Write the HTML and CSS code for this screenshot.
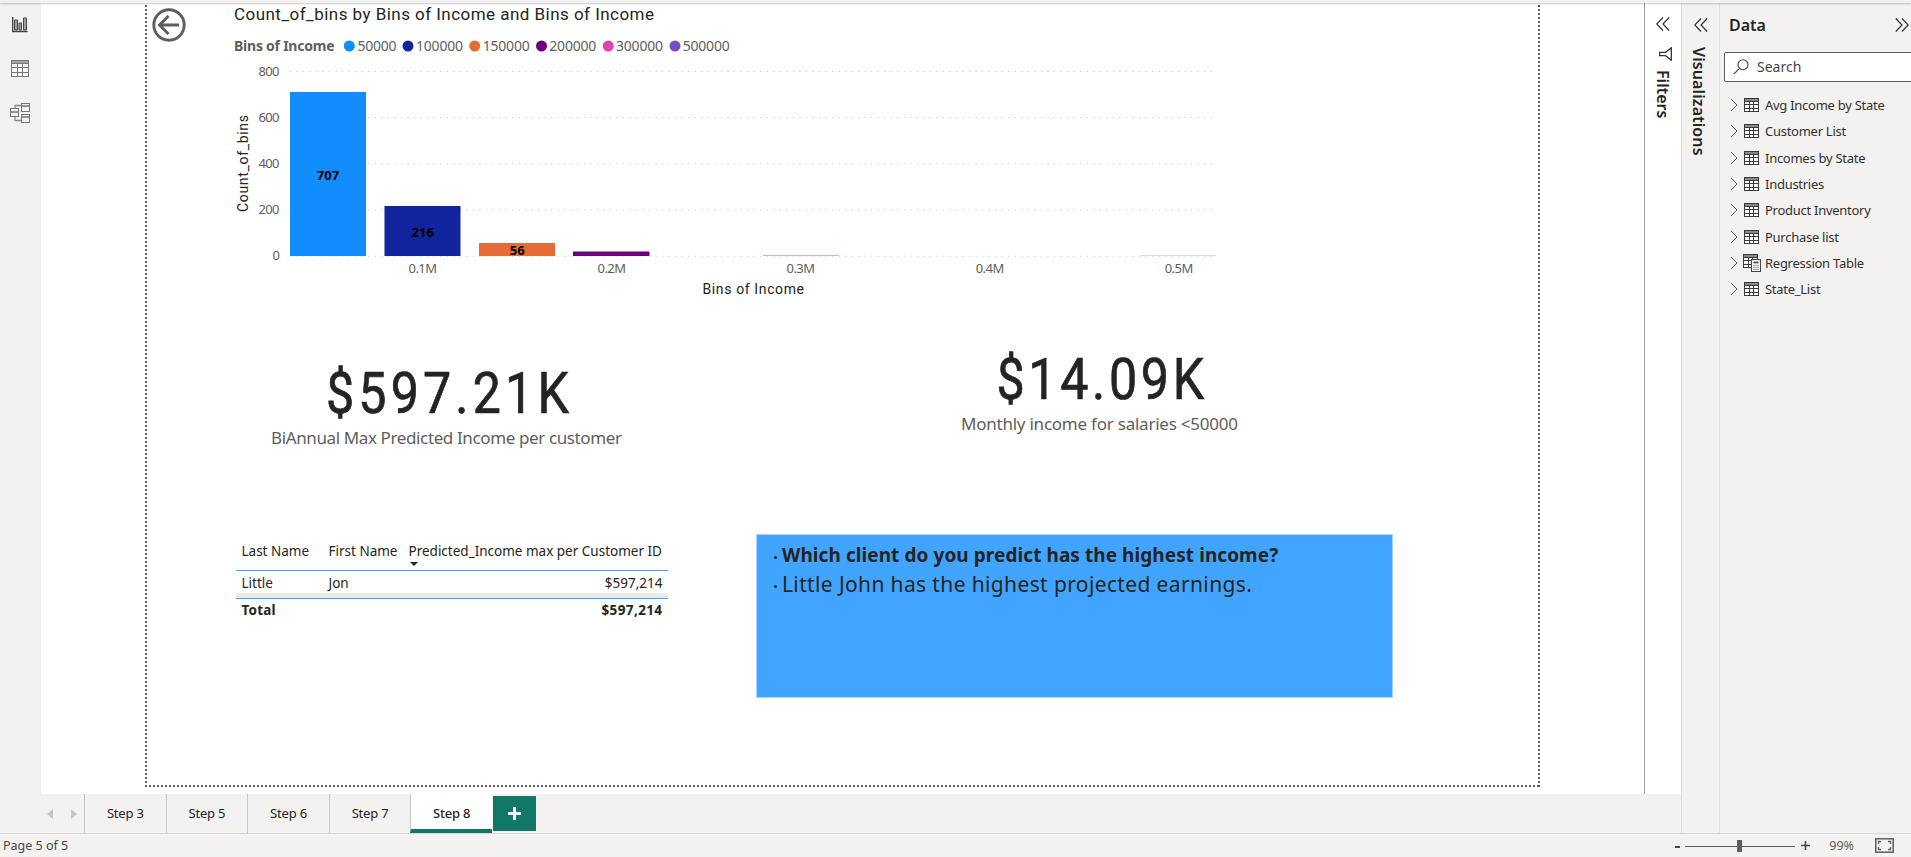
FILE: index.html
```html
<!DOCTYPE html>
<html lang="en">
<head>
<meta charset="utf-8">
<title>Report</title>
<link rel="stylesheet" href="styles.css">
</head>
<body>
<svg width="0" height="0" class="defs">
  <symbol id="i-table" viewBox="0 0 15 14"><rect x=".5" y=".5" width="14" height="13" fill="#fff" stroke="#3b3a39"/><rect x="1" y="1" width="13" height="2.500" fill="#8a8886"/><path d="M.5 3.500h14M.5 6.500h14M.5 10.500h14M5.500 3.500v10M9.500 3.500v10" stroke="#3b3a39" fill="none"/></symbol>
  <symbol id="i-chev" viewBox="0 0 8 14"><path d="M1 1l6 6-6 6" fill="none" stroke="#605e5c"/></symbol>
  <symbol id="i-dleft" viewBox="0 0 14 14"><path d="M7 .5L.8 7 7 13.500M13.200.5L7 7l6.200 6.500" fill="none" stroke="#323130" stroke-width="1.200"/></symbol>
</svg>
<div class="ribbon"></div>
<div class="main">
  <nav class="rail">
    <svg width="16" height="16" viewBox="0 0 16 16"><path d="M.7 0v14.500H15.500" fill="none" stroke="#484644" stroke-width="1.400"/><path d="M2.500 3h3v10h-3zM7 6h2.500v7H7zM11.500 1h3v12h-3z" fill="#a19f9d" stroke="#484644"/></svg>
    <svg width="18" height="17" viewBox="0 0 18 17"><rect x=".5" y=".5" width="17" height="16" fill="#f7f6f5" stroke="#797775"/><rect x="1" y="1" width="16" height="2.500" fill="#a8a6a4"/><path d="M.5 3.500h17M.5 7.500h17M.5 12.500h17M6.500 3.500v13M11.500 3.500v13" stroke="#797775" fill="none"/></svg>
    <svg width="20" height="20" viewBox="0 0 20 20"><path d="M5 6V2.500h6.500M5 13v4.500h6.500" fill="none" stroke="#8a8886" stroke-width="1.300"/><g fill="#f3f2f1" stroke="#797775"><rect x=".5" y="5.500" width="8" height="8"/><rect x="11.500" y=".5" width="8" height="8"/><rect x="11.500" y="11.500" width="8" height="8"/></g><path d="M.5 9h8M12 3h7M12 14h7" stroke="#797775" stroke-width="1.400"/></svg>
  </nav>
  <div class="workspace">
    <div class="upper">
      <div class="stage">
        <div class="page">
          <svg class="visual back" width="34" height="34" viewBox="0 0 34 34"><g fill="none" stroke="#605e5c" stroke-width="2.900"><circle cx="17" cy="17" r="15.200"/><path d="M27 17H8M16.500 8L7.500 17l9 9"/></g></svg>
          <svg class="visual chart" width="1000" height="310" viewBox="230 0 1000 310">
            <g class="din"><text x="234" y="20" font-size="17" textLength="420">Count_of_bins by Bins of Income and Bins of Income</text>
            <text x="702.500" y="294" font-size="14" textLength="101.500">Bins of Income</text>
            <text transform="translate(248 212) rotate(-90)" font-size="14" textLength="97">Count_of_bins</text></g>
            <g class="legend" font-size="14"><text class="b" x="234" y="51" textLength="100.500">Bins of Income</text>
            <text x="357.500" y="51" textLength="39">50000</text><text x="416" y="51" textLength="47">100000</text><text x="482.700" y="51" textLength="47">150000</text><text x="549.300" y="51" textLength="47">200000</text><text x="616" y="51" textLength="47">300000</text><text x="682.700" y="51" textLength="47">500000</text></g>
            <circle cx="349.300" cy="46" r="5.500" fill="#118dff"/><circle cx="408" cy="46" r="5.500" fill="#12239e"/><circle cx="474.700" cy="46" r="5.500" fill="#e66c37"/><circle cx="541.500" cy="46" r="5.500" fill="#6b007b"/><circle cx="608.300" cy="46" r="5.500" fill="#e044a7"/><circle cx="675" cy="46" r="5.500" fill="#744ec2"/>
            <path class="grid" d="M290 71.500H1216M290 117.500H1216M290 163.700H1216M290 210H1216M290 256.300H1216"/>
            <g class="axis" font-size="13"><text x="258.500" y="76" textLength="21">800</text><text x="258.500" y="122" textLength="21">600</text><text x="258.500" y="168" textLength="21">400</text><text x="258.500" y="214" textLength="21">200</text><text x="272.500" y="260">0</text>
            <text x="408.500" y="273" textLength="28.500">0.1M</text><text x="597.500" y="273" textLength="28.500">0.2M</text><text x="786.500" y="273" textLength="28.500">0.3M</text><text x="975.700" y="273" textLength="28.500">0.4M</text><text x="1164.700" y="273" textLength="28.500">0.5M</text></g>
            <rect x="290" y="92" width="76" height="164" fill="#118dff"/><rect x="384.500" y="206" width="76" height="50" fill="#12239e"/><rect x="479" y="243" width="76" height="13" fill="#e66c37"/><rect x="573" y="251.500" width="76.500" height="4.500" fill="#6b007b"/><rect x="763" y="255" width="76" height="1" fill="#e9a3d3"/><rect x="1141" y="255" width="75" height="1" fill="#d9d3ef"/>
            <g class="value" font-size="13"><text x="316.700" y="180" textLength="22.500">707</text><text x="411.500" y="237" textLength="22.500">216</text><text x="509.700" y="255" textLength="15">56</text></g>
          </svg>
          <svg class="visual card1" width="360" height="95" viewBox="268 360 360 95"><text class="din big" transform="translate(326 412.500) scale(.88 1)" font-size="57" textLength="276">$597.21K</text><text class="cap" x="271" y="444" font-size="17" textLength="351">BiAnnual Max Predicted Income per customer</text></svg>
          <svg class="visual card2" width="290" height="95" viewBox="955 346 290 95"><text class="din big" transform="translate(996.500 398.500) scale(.88 1)" font-size="57" textLength="236">$14.09K</text><text class="cap" x="961" y="430" font-size="17" textLength="277">Monthly income for salaries &lt;50000</text></svg>
          <div class="visual table">
            <div class="row head"><span>Last Name</span><span>First Name</span><span class="wide">Predicted_Income max per Customer ID<i class="sort"></i></span></div>
            <div class="row body"><span>Little</span><span>Jon</span><span class="num">$597,214</span></div>
            <div class="row total"><span>Total</span><span></span><span class="num">$597,214</span></div>
          </div>
          <div class="visual note">
            <div class="q"><i></i><b>Which client do you predict has the highest income?</b></div>
            <div class="a"><i></i><span>Little John has the highest projected earnings.</span></div>
          </div>
        </div>
      </div>
      <aside class="filters">
        <svg width="14" height="14"><use href="#i-dleft"/></svg>
        <svg class="funnel" width="13" height="14" viewBox="0 0 13 14"><path d="M12.300.8v12.400L6.500 8.700H.7V5.300h5.800z" fill="none" stroke="#323130" stroke-width="1.300"/></svg>
        <span class="vert">Filters</span>
      </aside>
    </div>
    <div class="tabs">
      <div class="arrows"><svg width="6" height="10"><path d="M6 0v10L0 5z" fill="#c8c6c4"/></svg><svg width="6" height="10"><path d="M0 0v10l6-5z" fill="#c8c6c4"/></svg></div>
      <div class="tab">Step 3</div><div class="tab">Step 5</div><div class="tab">Step 6</div><div class="tab">Step 7</div><div class="tab on">Step 8</div>
      <div class="add"><svg width="13" height="13"><path d="M6.500 0v13M0 6.500h13" stroke="#fff" stroke-width="3"/></svg></div>
    </div>
  </div>
  <aside class="viz"><svg width="14" height="14"><use href="#i-dleft"/></svg><span class="vert">Visualizations</span></aside>
  <aside class="data">
    <div class="dhead"><span>Data</span><svg width="14" height="14"><use href="#i-dleft" transform="translate(14 0) scale(-1 1)"/></svg></div>
    <div class="search"><svg width="16" height="16" viewBox="0 0 16 16"><g fill="none" stroke="#484644" stroke-width="1.100"><circle cx="10" cy="5.700" r="5"/><path d="M6.500 9.300L.7 15.200"/></g></svg><span>Search</span></div>
    <div class="list">
      <div class="item"><svg class="c"><use href="#i-chev"/></svg><svg class="t"><use href="#i-table"/></svg><span>Avg Income by State</span></div>
      <div class="item"><svg class="c"><use href="#i-chev"/></svg><svg class="t"><use href="#i-table"/></svg><span>Customer List</span></div>
      <div class="item"><svg class="c"><use href="#i-chev"/></svg><svg class="t"><use href="#i-table"/></svg><span>Incomes by State</span></div>
      <div class="item"><svg class="c"><use href="#i-chev"/></svg><svg class="t"><use href="#i-table"/></svg><span>Industries</span></div>
      <div class="item"><svg class="c"><use href="#i-chev"/></svg><svg class="t"><use href="#i-table"/></svg><span>Product Inventory</span></div>
      <div class="item"><svg class="c"><use href="#i-chev"/></svg><svg class="t"><use href="#i-table"/></svg><span>Purchase list</span></div>
      <div class="item"><svg class="c"><use href="#i-chev"/></svg><svg class="t calc" viewBox="0 0 18 18"><use href="#i-table" width="15" height="14"/><rect x="8.500" y="5.500" width="9" height="12" fill="#f3f2f1" stroke="#484644"/><path d="M10.500 8.500h5" stroke="#484644" stroke-width="1.600"/><path d="M10.500 11.500h5M10.500 13.500h5M10.500 15.500h5" stroke="#605e5c" stroke-dasharray="1 1"/></svg><span>Regression Table</span></div>
      <div class="item"><svg class="c"><use href="#i-chev"/></svg><svg class="t"><use href="#i-table"/></svg><span>State_List</span></div>
    </div>
  </aside>
</div>
<footer class="status">
  <span class="pg">Page 5 of 5</span>
  <div class="zoom"><svg width="5" height="14"><path d="M0 8h5" stroke="#484644" stroke-width="2"/></svg>
  <svg class="slider" width="110" height="12"><path d="M0 6.500h110" stroke="#605e5c"/><rect x="52" width="5" height="12" fill="#605e5c"/></svg>
  <svg width="9" height="9"><path d="M4.500 0v9M0 4.500h9" stroke="#484644" stroke-width="1.600"/></svg>
  <span class="pct">99%</span>
  <svg width="19" height="15" viewBox="0 0 19 15"><rect x=".8" y=".8" width="17.400" height="13.400" fill="none" stroke="#605e5c" stroke-width="1.500"/><path d="M3.500 6V3.500H6M13 3.500h2.500V6M15.500 9v2.500H13M6 11.500H3.500V9" fill="none" stroke="#605e5c" stroke-width="1.300"/></svg></div>
</footer>
</body>
</html>
```
FILE: styles.css
```css
* { box-sizing: border-box; }
body { margin: 0; width: 1911px; height: 857px; overflow: hidden; display: flex; flex-direction: column; background: #f3f2f1; color: #252423; font: 13px/18px "Noto Sans", "Open Sans", sans-serif; }
svg { display: block; flex: none; }
.defs { position: absolute; }
.ribbon { height: 3px; flex: none; background: #f3f2f1; box-shadow: 0 1px 2px rgba(0,0,0,.22); z-index: 2; }
.main { display: flex; height: 830px; flex: none; }
.rail { width: 41px; display: flex; flex-direction: column; align-items: flex-start; padding: 14px 0 0 10px; }
.rail svg:nth-child(1) { margin-left: 2px; }
.rail svg:nth-child(2) { margin: 27px 0 26px 1px; }
.workspace { width: 1640px; display: flex; flex-direction: column; }
.upper { display: flex; height: 791px; background: #fff; }
.stage { width: 1603px; padding: 0 0 0 104px; }
.page {
  --dot-v: repeating-linear-gradient(to bottom, transparent 0 2px, #605e5c 2px 4px);
  --dot-h: repeating-linear-gradient(to right, #605e5c 0 2px, transparent 2px 4px);
  position: relative; width: 1395px; height: 784px;
  background: var(--dot-v) left top / 2px 100% no-repeat, var(--dot-v) right top / 2px 100% no-repeat, var(--dot-h) left bottom / 100% 2px no-repeat;
}
.visual { position: absolute; }
.back { left: 7px; top: 5px; }
.chart { left: 85px; top: -3px; }
.card1 { left: 123px; top: 357px; }
.card2 { left: 810px; top: 343px; }
.din { font-family: Roboto, sans-serif; fill: #252423; }
.big { stroke: #252423; stroke-width: .7px; }
.cap, .legend, .axis { fill: #605e5c; }
.b { font-weight: 700; }
.value { font-weight: 700; fill: #000; }
.grid { stroke: #c8c6c4; stroke-dasharray: 1.100 5.430; fill: none; }
.table { left: 91px; top: 533px; width: 432px; font-size: 13.500px; }
.row { display: grid; grid-template-columns: 87px 80px 1fr; padding: 0 5.500px; }
.head { height: 35px; padding-top: 6px; border-bottom: 1px solid #41a4ff; }
.wide { position: relative; white-space: nowrap; }
.sort { position: absolute; left: 1px; top: 20px; border: 4.500px solid transparent; border-top: 4.500px solid #252423; border-bottom: 0; }
.body { height: 28px; padding-top: 3px; border-bottom: 1px solid #41a4ff; box-shadow: inset 0 -5px #ececec; }
.total { font-weight: 700; padding-top: 2px; letter-spacing: .2px; }
.total .num { letter-spacing: .4px; }
.num { text-align: right; }
.note { left: 611px; top: 531px; width: 637px; height: 164px; background: #41a4ff; border: 1px solid #a5d3ff; padding: 5px 0 0 17px; white-space: nowrap; }
.note div { display: flex; align-items: center; gap: 5px; height: 29px; }
.note i { width: 3px; height: 3px; border-radius: 50%; background: #252423; margin-top: 5px; }
.q { font-size: 19px; letter-spacing: .07px; }
.a { font-size: 21px; letter-spacing: .37px; }
.filters { width: 37px; border-left: 1px solid #a19f9d; padding: 14px 0 0 11px; background: #fff; }
.funnel { margin: 16px 0 0 3px; }
.vert { writing-mode: vertical-rl; font-size: 16px; line-height: 20px; font-weight: 600; display: block; }
.filters .vert { margin: 9px 0 0 -3px; }
.tabs { height: 39px; display: flex; background: #f3f2f1; }
.arrows { width: 43px; display: flex; gap: 18px; padding: 15px 0 0 6px; }
.tab { width: 81.600px; border-left: 1px solid #c8c6c4; text-align: center; padding-top: 10px; font-size: 13px; letter-spacing: -.2px; }
.tab.on { background: #fff; border-bottom: 4px solid #117865; font-weight: 500; }
.add { width: 43px; height: 35px; margin: 2px 0 0 1px; background: #117865; display: flex; align-items: center; justify-content: center; }
.viz { width: 38px; border-left: 1px solid #e1dfdd; padding: 15px 0 0 12px; }
.viz .vert { margin: 15px 0 0 -5px; letter-spacing: .1px; }
.data { width: 192px; border-left: 1px solid #e1dfdd; overflow: hidden; }
.dhead { display: flex; justify-content: space-between; align-items: center; height: 22px; margin: 11px 2px 0 9px; font-size: 16px; font-weight: 600; }
.search { width: 200px; height: 30px; margin: 16px 0 0 4px; background: #fff; border: 1px solid #605e5c; border-radius: 2px; display: flex; align-items: center; gap: 8px; padding-left: 8px; font-size: 14px; color: #484644; }
.list { padding: 10px 0 0 10px; }
.item { display: flex; align-items: center; height: 26.300px; color: #323130; letter-spacing: -.27px; white-space: nowrap; }
.c { width: 8px; height: 14px; margin-right: 6px; }
.t { width: 15px; height: 14px; margin-right: 6px; }
.calc { width: 18px; height: 18px; margin: 0 4px 0 -1px; }
.status { height: 24px; border-top: 1px solid #d8d6d4; display: flex; align-items: center; justify-content: space-between; padding: 0 17px 0 3px; color: #484644; font-size: 12.500px; }
.zoom { display: flex; align-items: center; }
.slider { margin: 0 6px 0 5px; }
.pct { margin: 0 21px 0 19px; color: #605e5c; }
```
